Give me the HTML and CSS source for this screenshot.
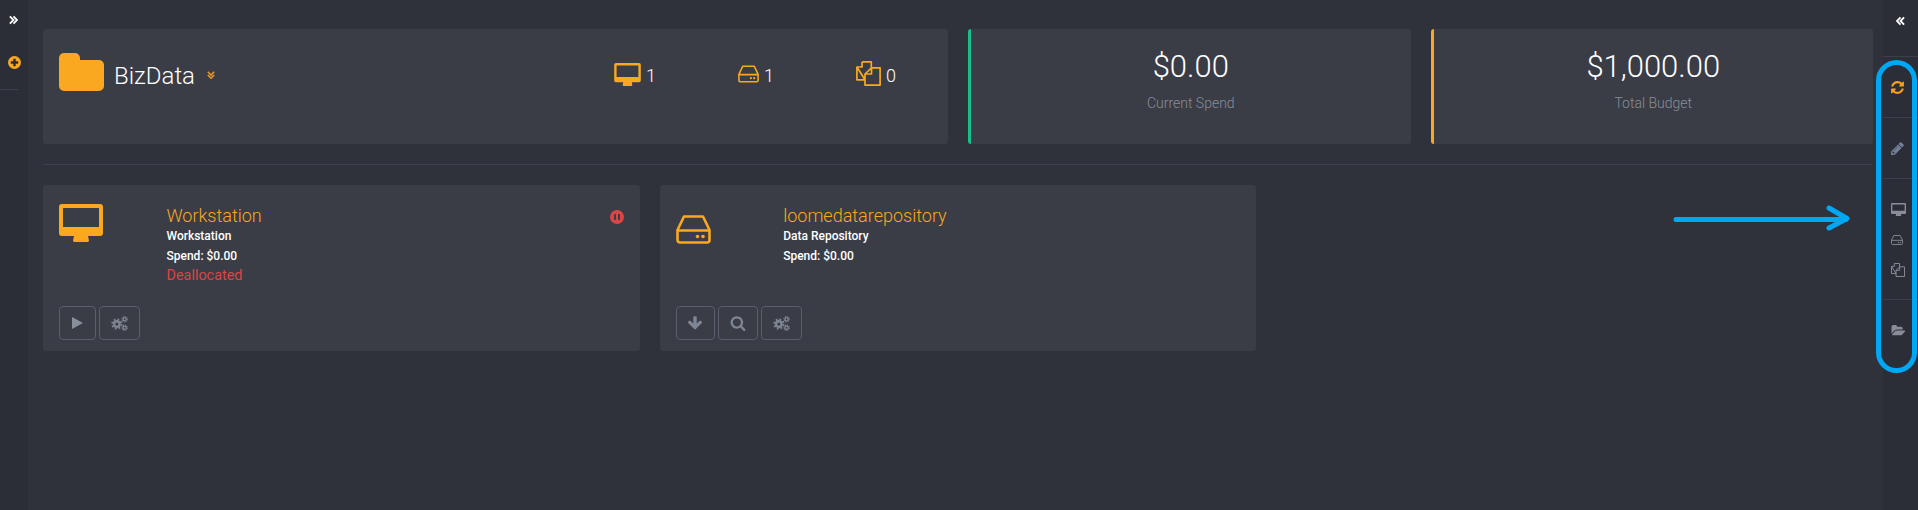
FILE: index.html
```html
<!DOCTYPE html>
<html lang="en">
<head>
  <meta charset="UTF-8" />
  <meta name="viewport" content="width=device-width, initial-scale=1.0" />
  <title>BizData</title>
  <link rel="stylesheet" href="styles.css">
</head>
<body>

  <svg class="defs" width="0" height="0">
    <symbol id="i-monitor" viewBox="0 0 44 38">
      <path fill="currentColor" fill-rule="evenodd" d="M3 0H41a3 3 0 0 1 3 3V29a3 3 0 0 1-3 3H3a3 3 0 0 1-3-3V3a3 3 0 0 1 3-3ZM4 4V23H40V4ZM15 32H29L30 36.5Q30 38 28 38H16Q14 38 14 36.5Z"/>
    </symbol>
    <symbol id="i-hdd" viewBox="0 0 35 29">
      <path fill="none" stroke="currentColor" stroke-width="2.6" stroke-linejoin="round" d="M8 1.5H27L33.5 15V25a2.5 2.5 0 0 1-2.5 2.5H4A2.5 2.5 0 0 1 1.500 25V15ZM1.500 15.500H33.500"/>
      <circle cx="21.500" cy="21.500" r="1.800" fill="currentColor"/>
      <circle cx="27" cy="21.500" r="1.800" fill="currentColor"/>
    </symbol>
    <symbol id="i-files" viewBox="0 0 25 25">
      <path fill="none" stroke="currentColor" stroke-width="1.700" stroke-linejoin="round" d="M6 .9H15.300V6.800M9 18.800H.9V6ZM6 .9V6H.9M15.500 6.800H24.100V24.100H9V13ZM15.500 6.800V13H9"/>
    </symbol>
    <symbol id="i-refresh" viewBox="0 0 1792 1792">
      <path fill="currentColor" d="M1639 1056q0 5-1 7-64 268-268 434.500t-478 166.500q-146 0-282.500-55t-243.500-157l-129 129q-19 19-45 19t-45-19-19-45v-448q0-26 19-45t45-19h448q26 0 45 19t19 45-19 45l-137 137q71 66 161 102t187 36q134 0 250-65t186-179q11-17 53-117 8-23 30-23h192q13 0 22.500 9.500t9.500 22.500zm25-800v448q0 26-19 45t-45 19h-448q-26 0-45-19t-19-45 19-45l138-138q-148-137-349-137-134 0-250 65t-186 179q-11 17-53 117-8 23-30 23h-199q-13 0-22.500-9.500t-9.500-22.500v-7q65-268 270-434.500t480-166.500q146 0 284 55.500t245 156.500l130-129q19-19 45-19t45 19 19 45z"/>
    </symbol>
    <symbol id="i-pencil" viewBox="0 0 1792 1792">
      <path fill="currentColor" d="M491 1536l91-91-235-235-91 91v107h128v128h107zm523-928q0-22-22-22-10 0-17 7l-542 542q-7 7-7 17 0 22 22 22 10 0 17-7l542-542q7-7 7-17zm-54-192l416 416-832 832h-416v-416zm683 96q0 53-37 90l-166 166-416-416 166-165q36-38 90-38 53 0 91 38l235 234q37 39 37 91z"/>
    </symbol>
    <symbol id="i-folder-open" viewBox="0 0 1920 1792">
      <path fill="currentColor" d="M1879 952q0 31-31 66l-336 396q-43 51-120.500 86.500t-143.500 35.500h-1088q-34 0-60.500-13t-26.500-43q0-31 31-66l336-396q43-51 120.500-86.500t143.500-35.500h1088q34 0 60.500 13t26.500 43zm-343-344v160h-832q-94 0-197 47.500t-164 119.500l-337 396-5 6q0-4-.5-12.500t-.5-12.500v-960q0-92 66-158t158-66h320q92 0 158 66t66 158v32h544q92 0 158 66t66 158z"/>
    </symbol>
    <symbol id="i-search" viewBox="0 0 1792 1792">
      <path fill="currentColor" d="M1216 832q0-185-131.500-316.500t-316.500-131.500-316.500 131.500-131.500 316.500 131.500 316.500 316.500 131.500 316.500-131.500 131.500-316.500zm512 832q0 52-38 90t-90 38q-54 0-90-38l-343-342q-179 124-399 124-143 0-273.500-55.500t-225-150-150-225-55.500-273.500 55.500-273.500 150-225 225-150 273.500-55.500 273.500 55.500 225 150 150 225 55.500 273.500q0 220-124 399l343 343q37 37 37 90z"/>
    </symbol>
    <symbol id="i-down" viewBox="0 0 1792 1792">
      <path fill="currentColor" d="M1675 832q0 53-37 90l-651 652q-39 37-91 37-53 0-90-37l-651-652q-38-36-38-90 0-53 38-91l74-75q39-37 91-37 53 0 90 37l294 294v-704q0-52 38-90t90-38h128q52 0 90 38t38 90v704l294-294q37-37 90-37 52 0 91 37l75 75q37 39 37 91z"/>
    </symbol>
    <symbol id="i-cogs" viewBox="0 0 16 14">
      <g fill="none" stroke="currentColor">
        <circle cx="5.500" cy="7.500" r="2.600" stroke-width="2.200"/>
        <circle cx="5.500" cy="7.500" r="4.400" stroke-width="1.800" stroke-dasharray="1.700 1.755"/>
        <circle cx="12.800" cy="3" r="1.500" stroke-width="1.300"/>
        <circle cx="12.800" cy="3" r="2.500" stroke-width="1.100" stroke-dasharray="1 .96"/>
        <circle cx="12.800" cy="11" r="1.500" stroke-width="1.300"/>
        <circle cx="12.800" cy="11" r="2.500" stroke-width="1.100" stroke-dasharray="1 .96"/>
      </g>
    </symbol>
    <symbol id="i-chevrons" viewBox="0 0 10 10">
      <path fill="none" stroke="currentColor" stroke-width="2" d="M1 1L5 5L1 9M5 1L9 5L5 9"/>
    </symbol>
  </svg>

  <div class="layout">
    <!-- Left bar -->
    <aside class="side-left">
      <div class="side-left-top">
        <svg class="ico-chevron"><use href="#i-chevrons"/></svg>
      </div>
      <div class="side-left-add">
        <svg class="add-dot" viewBox="0 0 13 13">
          <circle cx="6.500" cy="6.500" r="6.500" fill="#f9a820"/>
          <path d="M2.800 6.500H10.200M6.500 2.800V10.200" stroke="#2b2e36" stroke-width="2.400"/>
        </svg>
      </div>
    </aside>

    <!-- Main content -->
    <main class="main">
      <section class="top-row">
        <div class="panel project">
          <svg class="project-folder" viewBox="0 0 45 38"><path fill="currentColor" d="M5 0H16a5 5 0 0 1 5 5V7H40a5 5 0 0 1 5 5V33a5 5 0 0 1-5 5H5a5 5 0 0 1-5-5V5a5 5 0 0 1 5-5Z"/></svg>
          <h1 class="project-name">BizData</h1>
          <svg class="project-toggle"><use href="#i-chevrons"/></svg>
          <div class="counts">
            <div class="count"><svg class="count-monitor"><use href="#i-monitor"/></svg><span>1</span></div>
            <div class="count"><svg class="count-hdd"><use href="#i-hdd"/></svg><span>1</span></div>
            <div class="count"><svg class="count-files"><use href="#i-files"/></svg><span>0</span></div>
          </div>
        </div>
        <div class="panel stat stat-green">
          <div class="stat-value">$0.00</div>
          <div class="stat-label">Current Spend</div>
        </div>
        <div class="panel stat stat-orange">
          <div class="stat-value">$1,000.00</div>
          <div class="stat-label">Total Budget</div>
        </div>
      </section>

      <hr class="divider">

      <section class="resources">
        <div class="panel resource">
          <div class="resource-info">
            <div class="resource-icon"><svg class="big-monitor"><use href="#i-monitor"/></svg></div>
            <div class="resource-text">
              <div class="resource-title">Workstation</div>
              <div class="resource-line">Workstation</div>
              <div class="resource-line">Spend: $0.00</div>
              <div class="resource-state">Deallocated</div>
            </div>
            <span class="pause-dot"></span>
          </div>
          <div class="actions">
            <button class="action w37"><span class="play"></span></button>
            <button class="action w41"><svg class="ico-cogs"><use href="#i-cogs"/></svg></button>
          </div>
        </div>

        <div class="panel resource">
          <div class="resource-info">
            <div class="resource-icon"><svg class="big-hdd"><use href="#i-hdd"/></svg></div>
            <div class="resource-text">
              <div class="resource-title">loomedatarepository</div>
              <div class="resource-line">Data Repository</div>
              <div class="resource-line">Spend: $0.00</div>
            </div>
          </div>
          <div class="actions">
            <button class="action w39"><svg class="ico-btn"><use href="#i-down"/></svg></button>
            <button class="action w40"><svg class="ico-btn"><use href="#i-search"/></svg></button>
            <button class="action w41"><svg class="ico-cogs"><use href="#i-cogs"/></svg></button>
          </div>
        </div>
      </section>
    </main>

    <!-- Right bar -->
    <aside class="side-right">
      <div class="side-sec sec-collapse"><svg class="ico-chevron flip"><use href="#i-chevrons"/></svg></div>
      <div class="side-sec sec-one"><svg class="ico-refresh"><use href="#i-refresh"/></svg></div>
      <div class="side-sec sec-one"><svg class="ico-pencil"><use href="#i-pencil"/></svg></div>
      <div class="side-sec sec-list">
        <svg class="side-monitor"><use href="#i-monitor"/></svg>
        <svg class="side-hdd"><use href="#i-hdd"/></svg>
        <svg class="side-files"><use href="#i-files"/></svg>
      </div>
      <div class="side-sec sec-last"><svg class="side-open"><use href="#i-folder-open"/></svg></div>
    </aside>
  </div>

  <!-- Annotation drawn over the screen -->
  <svg class="annotation" viewBox="0 0 1918 510">
    <rect x="1878.500" y="62.500" width="36" height="308" rx="18"/>
    <path d="M1676 219.500H1846M1829 208L1847 218.500L1829 228"/>
  </svg>

</body>
</html>
```

FILE: styles.css
```css
:root {
  --bg: #2f323b;
  --bar: #2b2e36;
  --panel: #3a3d46;
  --line: #3d404c;
  --orange: #f9a820;
  --green: #17c088;
  --red: #db4545;
  --muted: #8a8d97;
  --btn-line: #5a5d6b;
  --btn-icon: #7f8693;
}

* {
  margin: 0;
  padding: 0;
  box-sizing: border-box;
}

html,
body {
  width: 100%;
  height: 100%;
  overflow: hidden;
  font-family: Roboto, 'Liberation Sans', sans-serif;
  background-color: var(--bg);
  color: #ffffff;
}

svg {
  display: block;
}

.defs {
  position: absolute;
}

.layout {
  display: flex;
  height: 510px;
}

/* left bar */
.side-left {
  width: 28px;
  flex: none;
  background: var(--bar);
}

.side-left-top {
  height: 49px;
  padding: 15px 0 0 9px;
}

.ico-chevron {
  width: 9px;
  height: 10px;
  color: #ffffff;
}

.flip {
  transform: scaleX(-1);
}

.side-left-add {
  width: 18px;
  height: 41px;
  padding: 7px 0 0 8px;
  border-bottom: 1px solid var(--line);
}

.add-dot {
  width: 13px;
  height: 13px;
}

/* main */
.main {
  flex: 1;
  padding: 29px 10px 0 15px;
}

.panel {
  background: var(--panel);
  border-radius: 3px;
}

.top-row {
  display: grid;
  grid-template-columns: 905px 1fr 1fr;
  gap: 20px;
  height: 115px;
}

.project {
  display: flex;
  align-items: flex-start;
  padding: 24px 52px 0 16px;
}

.project-folder {
  width: 45px;
  height: 38px;
  color: var(--orange);
}

.project-name {
  margin: 8px 0 0 10px;
  font-size: 24px;
  line-height: 30px;
  font-weight: 300;
}

.project-toggle {
  width: 8px;
  height: 8px;
  margin: 18px 0 0 12px;
  color: #e8962a;
  transform: rotate(90deg);
}

.counts {
  display: flex;
  gap: 82px;
  margin-left: auto;
  margin-top: 9px;
  color: var(--orange);
}

.count {
  display: flex;
  align-items: flex-end;
  height: 24px;
}

.count span {
  margin-left: 5px;
  font-size: 18px;
  line-height: 21px;
  font-weight: 300;
  color: #ffffff;
}

.count-monitor {
  width: 27px;
  height: 23px;
}

.count-hdd {
  width: 21px;
  height: 18px;
  margin-bottom: 3px;
}

.count-files {
  width: 25px;
  height: 25px;
}

.stat {
  text-align: center;
  border-left: 3px solid;
  padding-top: 18px;
}

.stat-green {
  border-left-color: var(--green);
}

.stat-orange {
  border-left-color: var(--orange);
}

.stat-value {
  font-size: 31px;
  line-height: 40px;
  font-weight: 300;
}

.stat-label {
  margin-top: 6px;
  font-size: 14px;
  line-height: 20px;
  font-weight: 300;
  color: var(--muted);
}

.divider {
  margin-top: 20px;
  border: none;
  border-top: 1px solid var(--line);
}

.resources {
  display: grid;
  grid-template-columns: repeat(3, 1fr);
  gap: 20px;
  margin-top: 20px;
}

.resource {
  height: 166px;
  padding: 19px 16px 11px;
  display: flex;
  flex-direction: column;
  justify-content: space-between;
}

.resource-info {
  display: flex;
  align-items: flex-start;
}

.resource-icon {
  width: 107.500px;
  color: var(--orange);
}

.big-monitor {
  width: 44px;
  height: 38px;
}

.big-hdd {
  width: 35px;
  height: 29px;
  margin-top: 11px;
}

.resource-text {
  flex: 1;
  padding-top: 2px;
}

.resource-title {
  font-size: 18px;
  line-height: 20px;
  font-weight: 300;
  color: var(--orange);
}

.resource-line {
  font-size: 12px;
  line-height: 20px;
  font-weight: 500;
}

.resource-state {
  font-size: 14.400px;
  line-height: 20px;
  color: var(--red);
}

.pause-dot {
  position: relative;
  width: 14px;
  height: 14px;
  margin-top: 6px;
  border-radius: 50%;
  background: var(--red);
}

.pause-dot::before {
  content: '';
  position: absolute;
  left: 4px;
  top: 4px;
  width: 2px;
  height: 6px;
  border-left: 2px solid #3a3d46;
  border-right: 2px solid #3a3d46;
}

.actions {
  display: flex;
  gap: 3px;
}

.action {
  display: flex;
  justify-content: center;
  align-items: center;
  height: 34px;
  background: transparent;
  border: 1px solid var(--btn-line);
  border-radius: 4px;
  color: var(--btn-icon);
}

.w37 {
  width: 37px;
}

.w39 {
  width: 39px;
}

.w40 {
  width: 40px;
}

.w41 {
  width: 41px;
}

.play {
  width: 0;
  height: 0;
  border-left: 11px solid #8a909b;
  border-top: 6.500px solid transparent;
  border-bottom: 6.500px solid transparent;
}

.ico-cogs {
  width: 17px;
  height: 15px;
}

.ico-btn {
  width: 16px;
  height: 16px;
}

/* right bar */
.side-right {
  width: 35px;
  flex: none;
  background: var(--bar);
  color: var(--muted);
}

.side-sec {
  padding-left: 8px;
  border-bottom: 1px solid var(--line);
}

.sec-collapse {
  height: 57px;
  padding: 16px 0 0 13px;
}

.sec-one {
  height: 61px;
  padding: 23px 0 0 7px;
}

.sec-list {
  height: 121px;
  padding-top: 24px;
  display: flex;
  flex-direction: column;
}

.sec-last {
  border-bottom: none;
  padding-top: 24px;
}

.ico-refresh {
  width: 15px;
  height: 15px;
  color: #f7a01e;
}

.ico-pencil {
  width: 15px;
  height: 15px;
  color: #75809a;
}

.side-monitor {
  width: 15px;
  height: 13px;
}

.side-hdd {
  width: 12px;
  height: 10px;
  margin-top: 19px;
}

.side-files {
  width: 14px;
  height: 14px;
  margin-top: 18px;
}

.side-open {
  width: 15px;
  height: 13px;
}

/* annotation */
.annotation {
  position: absolute;
  left: 0;
  top: 0;
  width: 1918px;
  height: 510px;
  fill: none;
  stroke: #00a8f3;
  stroke-width: 5;
  stroke-linecap: round;
  stroke-linejoin: round;
  pointer-events: none;
}
```
